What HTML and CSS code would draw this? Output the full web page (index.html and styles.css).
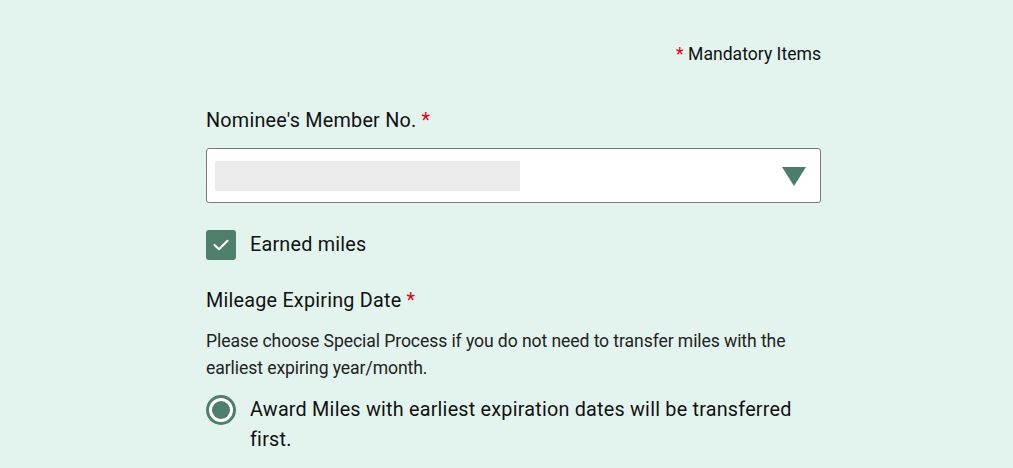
FILE: index.html
```html
<!DOCTYPE html>
<html>
<head>
<meta charset="utf-8">
<link rel="stylesheet" href="styles.css">
</head>
<body>
<div class="page">
  <div class="form">
    <p class="mandatory"><span class="req">*</span> Mandatory Items</p>
    <label class="label first">Nominee's Member No. <span class="req">*</span></label>
    <div class="select">
      <div class="placeholder"></div>
      <svg class="arrow" width="24" height="19" viewBox="0 0 24 19"><polygon points="0,0 24,0 12,19" fill="#4b7d69"/></svg>
    </div>
    <div class="check-row">
      <span class="checkbox">
        <svg width="16" height="12" viewBox="0 0 16 12"><polyline points="1.5,6 6,10.2 14.5,1.8" fill="none" stroke="#fff" stroke-width="2.2" stroke-linecap="round" stroke-linejoin="round"/></svg>
      </span>
      <span class="check-text">Earned miles</span>
    </div>
    <label class="label second">Mileage Expiring Date <span class="req">*</span></label>
    <p class="desc">Please choose Special Process if you do not need to transfer miles with the earliest expiring year/month.</p>
    <div class="radio-row">
      <span class="radio"><span class="dot"></span></span>
      <span class="radio-text">Award Miles with earliest expiration dates will be transferred first.</span>
    </div>
  </div>
</div>
</body>
</html>
```
FILE: styles.css
```css
* { box-sizing: border-box; }
html, body { margin: 0; padding: 0; }
body {
  background: #e3f4ee;
  font-family: Roboto, "Liberation Sans", sans-serif;
  color: #111;
  width: 1013px;
  height: 468px;
  overflow: hidden;
}
.page { display: flex; justify-content: flex-start; padding-left: 206px; }
.form { width: 615px; display: flex; flex-direction: column; }
.mandatory {
  margin: 44px 0 0;
  text-align: right;
  font-size: 17.6px;
  line-height: 20px;
}
.req { color: #e60012; }
.label {
  display: block;
  font-size: 19.8px;
  line-height: 26px;
  letter-spacing: 0.22px;
}
.label.first { margin-top: 44px; }
.select {
  margin-top: 14px;
  height: 55px;
  background: #fff;
  border: 1px solid #7b7b7b;
  border-radius: 3px;
  display: flex;
  align-items: center;
  justify-content: space-between;
  padding: 0 14px 0 8px;
}
.placeholder { width: 305px; height: 30px; background: #ebebeb; }
.arrow { display: block; margin-top: 1px; }
.check-row {
  margin-top: 26px;
  display: flex;
  align-items: center;
  gap: 14px;
}
.checkbox {
  width: 30px; height: 30px;
  background: #4e7f6a;
  border-radius: 3px;
  display: flex; align-items: center; justify-content: center;
}
.check-text { font-size: 19.8px; line-height: 30px; letter-spacing: 0.22px; margin-top: 1px; }
.label.second { margin-top: 28px; }
.desc {
  margin: 14px 0 0;
  font-size: 17.6px;
  line-height: 27px;
  letter-spacing: -0.09px;
  color: #222;
}
.radio-row {
  margin-top: 13px;
  display: flex;
  align-items: flex-start;
  gap: 14px;
}
.radio {
  flex: none;
  width: 30px; height: 30px;
  border: 3px solid #4e7f6a;
  border-radius: 50%;
  background: #fff;
  display: flex; align-items: center; justify-content: center;
}
.dot { width: 18px; height: 18px; border-radius: 50%; background: #4e7f6a; }
.radio-text { font-size: 19.8px; line-height: 30px; letter-spacing: 0.22px; }
```
